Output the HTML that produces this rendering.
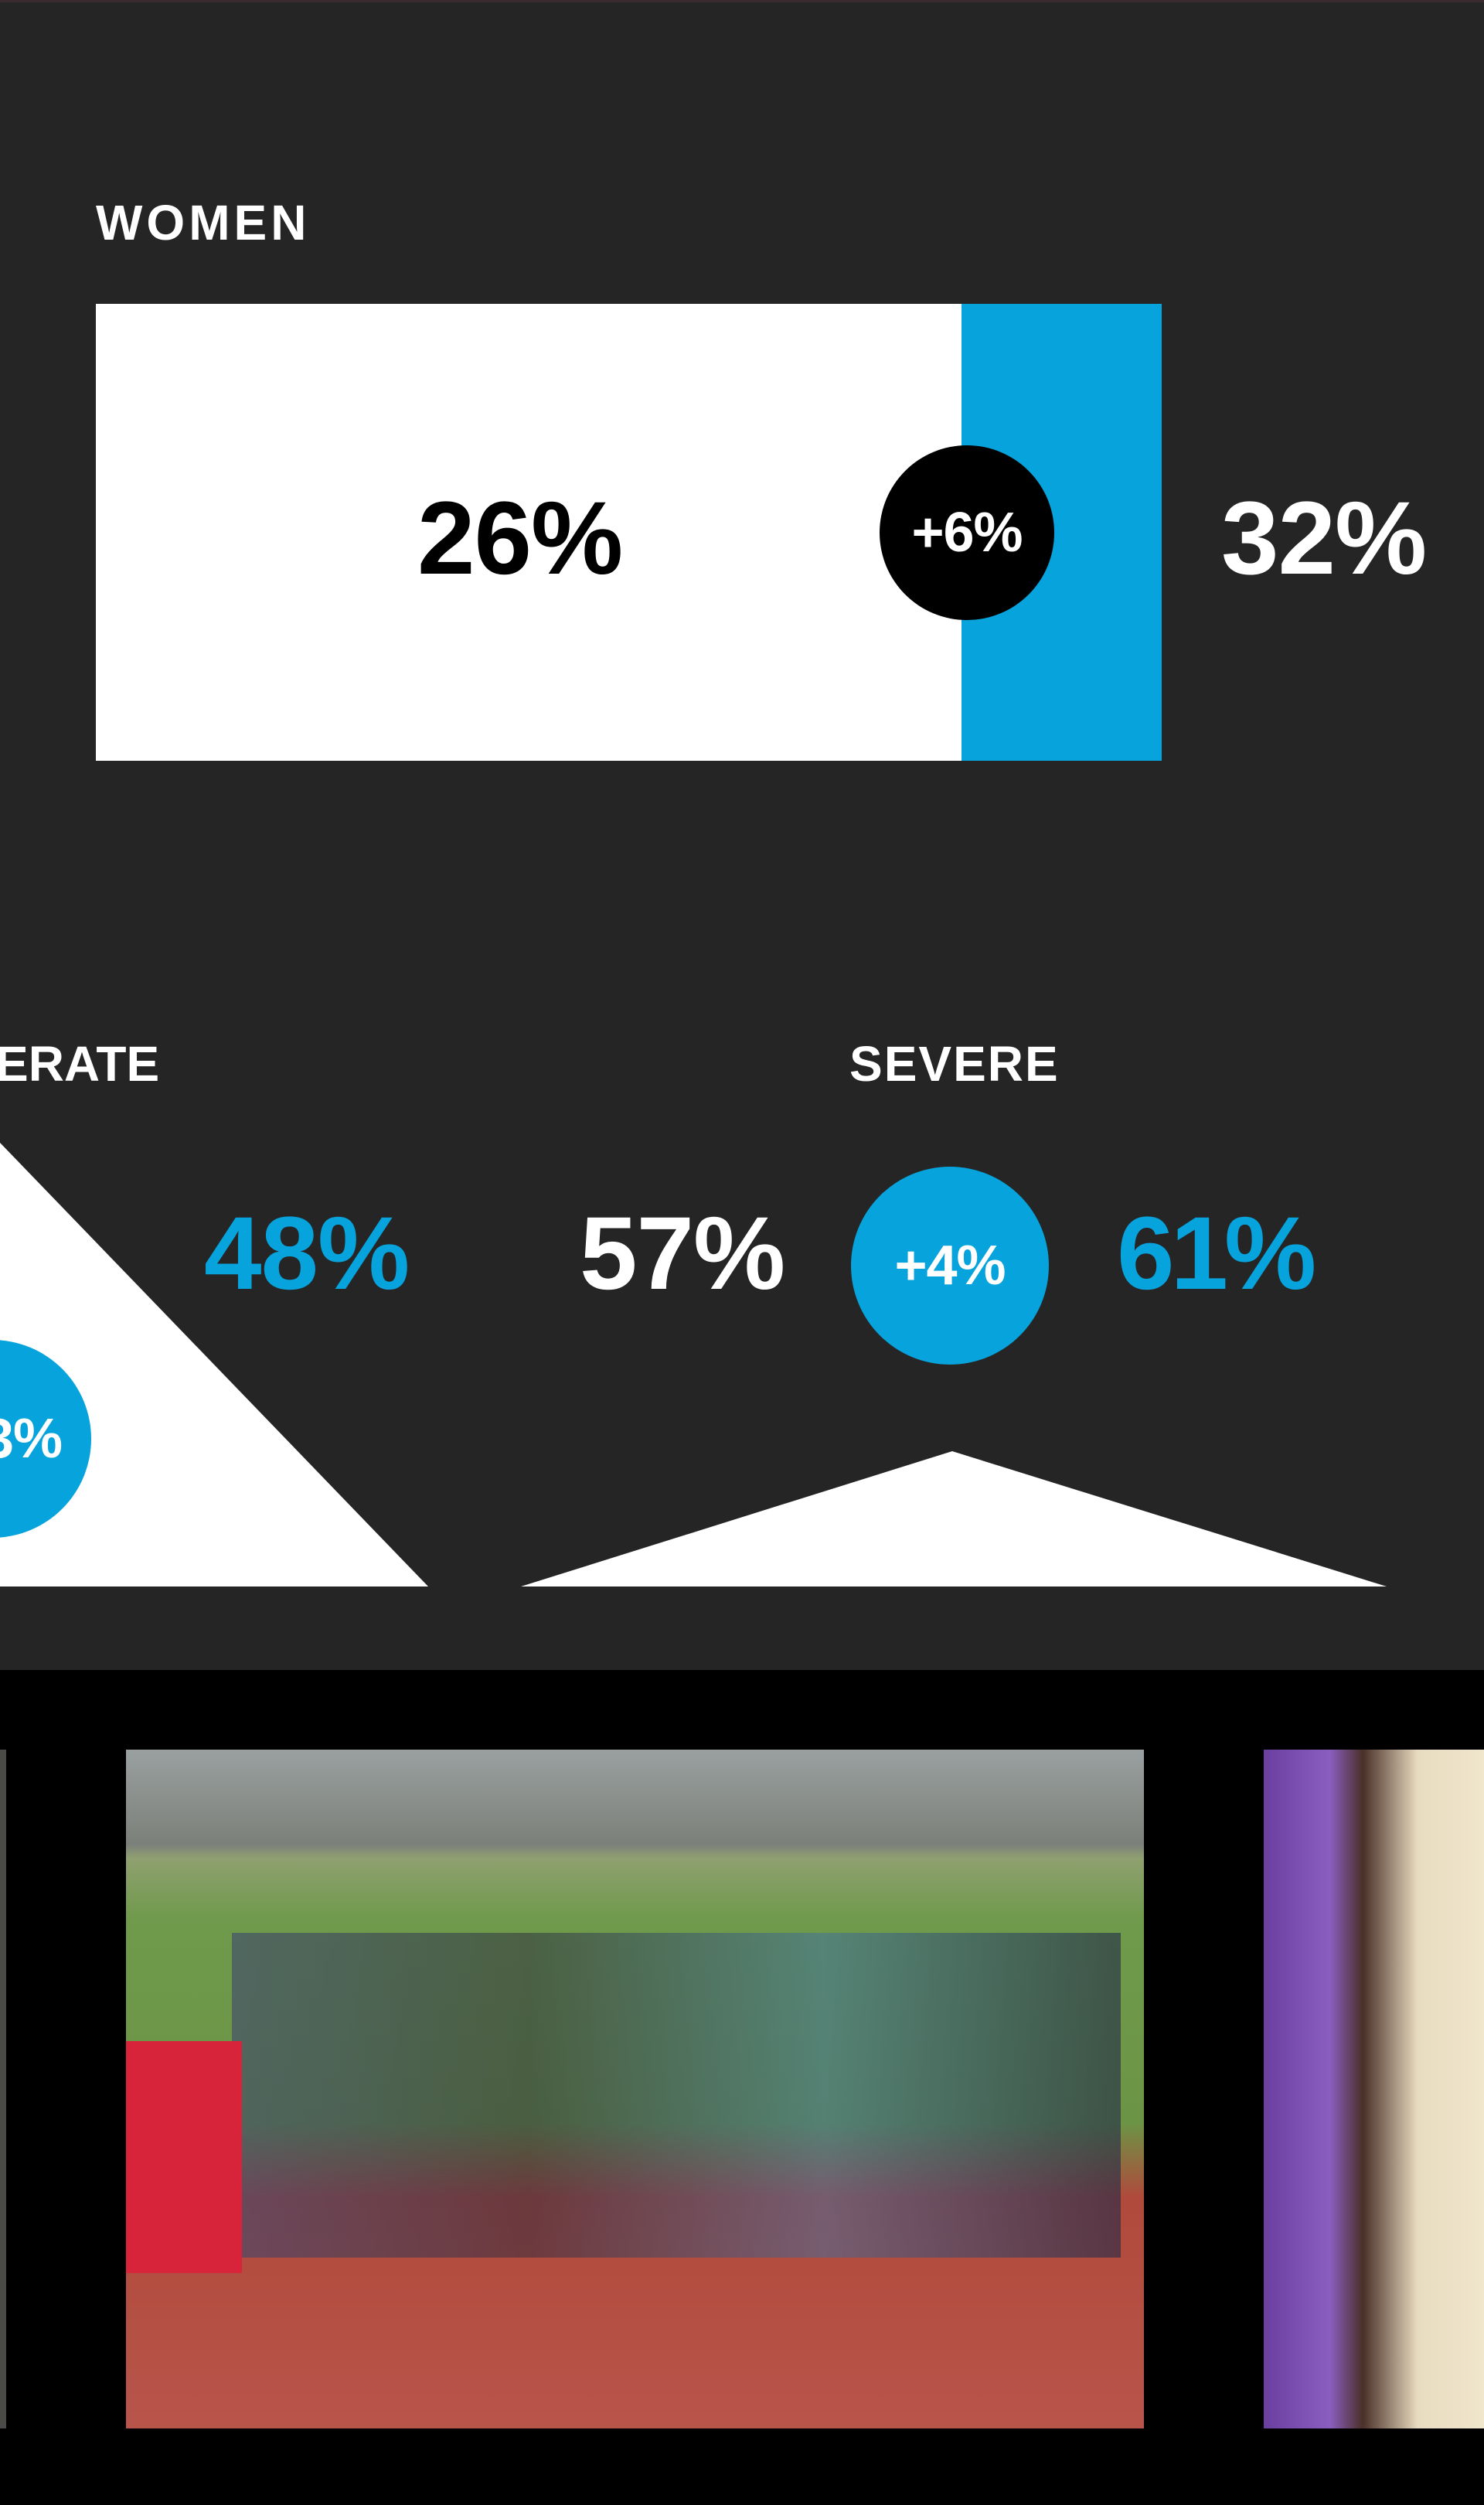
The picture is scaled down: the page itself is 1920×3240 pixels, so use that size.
<!DOCTYPE html>
<html><head><meta charset="utf-8"><style>
*{margin:0;padding:0;box-sizing:border-box}
html,body{width:1920px;height:3240px;background:#000;overflow:hidden}
body{position:relative;font-family:"Liberation Sans",sans-serif;font-weight:bold}
.dark{position:absolute;left:0;top:0;width:1920px;height:2160px;background:#252525}
.a{position:absolute;white-space:nowrap;line-height:1}
.lbl{font-size:64px;color:#fff;letter-spacing:2px}
.big{font-size:134px;letter-spacing:-1px}
.circ{position:absolute;border-radius:50%;display:flex;align-items:center;justify-content:center;color:#fff;font-size:72px;letter-spacing:-1px}
.ph{position:absolute;top:2263px;height:878px}
</style></head><body>
<div class="dark"></div>
<div style="position:absolute;left:0;top:0;width:1920px;height:3px;background:#3a2a2e"></div>
<div class="a lbl" style="left:124px;top:256px;letter-spacing:5px">WOMEN</div>
<div style="position:absolute;left:124px;top:393px;width:1120px;height:591px;background:#fff"></div>
<div style="position:absolute;left:1244px;top:393px;width:259px;height:591px;background:#07a3dc"></div>
<div class="a big" style="left:540px;top:630px;color:#000">26%</div>
<div class="circ" style="left:1138px;top:576px;width:226px;height:226px;background:#000">+6%</div>
<div class="a big" style="left:1580px;top:630px;color:#fff">32%</div>

<div class="a lbl" style="left:-6px;top:1344px;letter-spacing:0">ERATE</div>
<div class="a lbl" style="left:1099px;top:1344px">SEVERE</div>
<svg style="position:absolute;left:0;top:0" width="1920" height="2160">
<polygon points="0,1478 554,2052 0,2052" fill="#fff"/>
<polygon points="674,2052 1232,1877 1794,2052" fill="#fff"/>
</svg>
<div class="circ" style="left:-138px;top:1733px;width:256px;height:256px;background:#07a3dc;justify-content:flex-end;padding-right:38px">3%</div>
<div class="a big" style="left:264px;top:1555px;color:#07a3dc">48%</div>
<div class="a big" style="left:750px;top:1555px;color:#fff">57%</div>
<div class="circ" style="left:1101px;top:1509px;width:256px;height:256px;background:#07a3dc">+4%</div>
<div class="a big" style="left:1445px;top:1555px;color:#07a3dc;letter-spacing:-5px">61%</div>

<div class="ph" style="left:0;width:8px;background:#4a4a48"></div>
<div class="ph" style="left:163px;width:1317px;background:linear-gradient(#9aa0a0 0%,#7c807a 14%,#8fa070 16%,#6f9a4c 25%,#6c9445 55%,#b04a3c 66%,#b8544a 100%)"></div>
<div style="position:absolute;left:300px;top:2500px;width:1150px;height:420px;background:linear-gradient(90deg,rgba(60,70,110,.6),rgba(40,40,60,.5),rgba(60,110,160,.5),rgba(30,40,70,.6))"></div>
<div style="position:absolute;left:163px;top:2640px;width:150px;height:300px;background:#d8243a"></div>
<div class="ph" style="left:1635px;width:285px;background:linear-gradient(90deg,#6a3fa0 0%,#8a5ec0 30%,#4a3028 45%,#e8dcc0 70%,#f0e6cc 100%)"></div>
</body></html>
